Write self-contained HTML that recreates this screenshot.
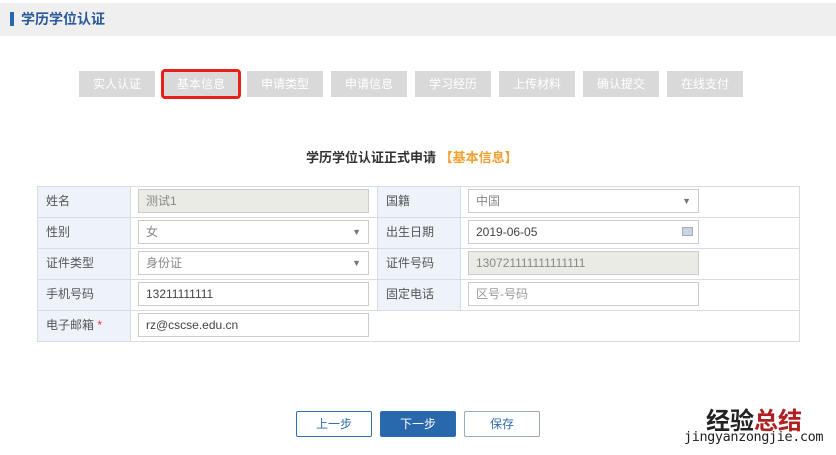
<!DOCTYPE html>
<html><head><meta charset="utf-8"><style>
*{margin:0;padding:0;box-sizing:border-box}
body{width:836px;height:455px;background:#fff;position:relative;overflow:hidden;font-family:"Liberation Sans","Noto Sans CJK SC",sans-serif;font-size:12px;color:#555}
.a{position:absolute}
.hd{left:0;top:3px;width:836px;height:33px;background:#efefef}
.tab{top:71px;width:76px;height:26px;background:#d9d9d9;color:#fff;text-align:center;line-height:26px;font-size:12px}
.cell{border:1px solid #d8dde4;height:32px}
.lab{background:#eef3fa;color:#555;padding-left:8px;line-height:28px}
.inp{height:24px;border:1px solid #ccc;background:#fff;line-height:22px;padding-left:7px;color:#444}
.dis{background:#ebebe5;color:#888}
.arr{position:absolute;right:7px;top:0;font-size:9px;color:#777}
.btn{top:411px;width:76px;height:26px;text-align:center;line-height:24px;font-size:12px;border:1px solid #2f6eac;color:#2f6eac;border-radius:2px}
</style></head><body>
<div class="a hd"></div>
<div class="a" style="left:10px;top:12px;width:4px;height:14px;background:#2a66b0"></div>
<div class="a" style="left:21px;top:9px;font-size:14px;color:#2a5a9a;font-weight:bold">学历学位认证</div>
<div class="a tab" style="left:79px">实人认证</div>
<div class="a tab" style="left:163px">基本信息</div>
<div class="a" style="left:161px;top:69px;width:80px;height:30px;border:3px solid #e8201a;border-radius:4px"></div>
<div class="a tab" style="left:247px">申请类型</div>
<div class="a tab" style="left:331px">申请信息</div>
<div class="a tab" style="left:415px">学习经历</div>
<div class="a tab" style="left:499px">上传材料</div>
<div class="a tab" style="left:583px">确认提交</div>
<div class="a tab" style="left:667px">在线支付</div>
<div class="a" style="left:306px;top:147px;font-size:13px;font-weight:bold;color:#333">学历学位认证正式申请 <span style="color:#f0a030">【基本信息】</span></div>

<div class="a" style="left:37px;top:186px;width:763px;height:156px;border:1px solid #d8dde4"></div>
<div class="a lab cell" style="left:37px;top:186px;width:94px">姓名</div>
<div class="a lab cell" style="left:37px;top:217px;width:94px">性别</div>
<div class="a lab cell" style="left:37px;top:248px;width:94px">证件类型</div>
<div class="a lab cell" style="left:37px;top:279px;width:94px">手机号码</div>
<div class="a lab cell" style="left:37px;top:310px;width:94px">电子邮箱 <span style="color:#e33">*</span></div>
<div class="a cell" style="left:130px;top:186px;width:248px"></div>
<div class="a cell" style="left:130px;top:217px;width:248px"></div>
<div class="a cell" style="left:130px;top:248px;width:248px"></div>
<div class="a cell" style="left:130px;top:279px;width:248px"></div>
<div class="a cell" style="left:130px;top:310px;width:670px"></div>
<div class="a lab cell" style="left:377px;top:186px;width:84px">国籍</div>
<div class="a lab cell" style="left:377px;top:217px;width:84px">出生日期</div>
<div class="a lab cell" style="left:377px;top:248px;width:84px">证件号码</div>
<div class="a lab cell" style="left:377px;top:279px;width:84px">固定电话</div>
<div class="a cell" style="left:460px;top:186px;width:340px"></div>
<div class="a cell" style="left:460px;top:217px;width:340px"></div>
<div class="a cell" style="left:460px;top:248px;width:340px"></div>
<div class="a cell" style="left:460px;top:279px;width:340px"></div>

<div class="a inp dis" style="left:138px;top:189px;width:231px">测试1</div>
<div class="a inp" style="left:138px;top:220px;width:231px;color:#888">女<span class="arr">▼</span></div>
<div class="a inp" style="left:138px;top:251px;width:231px;color:#888">身份证<span class="arr">▼</span></div>
<div class="a inp" style="left:138px;top:282px;width:231px">13211111111</div>
<div class="a inp" style="left:138px;top:313px;width:231px">rz@cscse.edu.cn</div>
<div class="a inp" style="left:468px;top:189px;width:231px;color:#888">中国<span class="arr">▼</span></div>
<div class="a inp" style="left:468px;top:220px;width:231px">2019-06-05<span style="position:absolute;right:5px;top:6px;width:11px;height:9px;background:#c8d4e2;border:1px solid #aab"></span></div>
<div class="a inp dis" style="left:468px;top:251px;width:231px">130721111111111111</div>
<div class="a inp" style="left:468px;top:282px;width:231px;color:#999">区号-号码</div>

<div class="a btn" style="left:296px">上一步</div>
<div class="a btn" style="left:380px;background:#2a68ad;color:#fff">下一步</div>
<div class="a btn" style="left:464px;border-color:#9ab">保存</div>
<div class="a" style="left:706px;top:401px;font-size:24px;font-weight:bold;color:#222;letter-spacing:0px">经验<span style="color:#b02020">总结</span></div>
<div class="a" style="left:684px;top:429px;font-size:13.5px;font-family:'DejaVu Sans Mono',monospace;color:#222;letter-spacing:-0.4px">jingyanzongjie.com</div>
</body></html>
